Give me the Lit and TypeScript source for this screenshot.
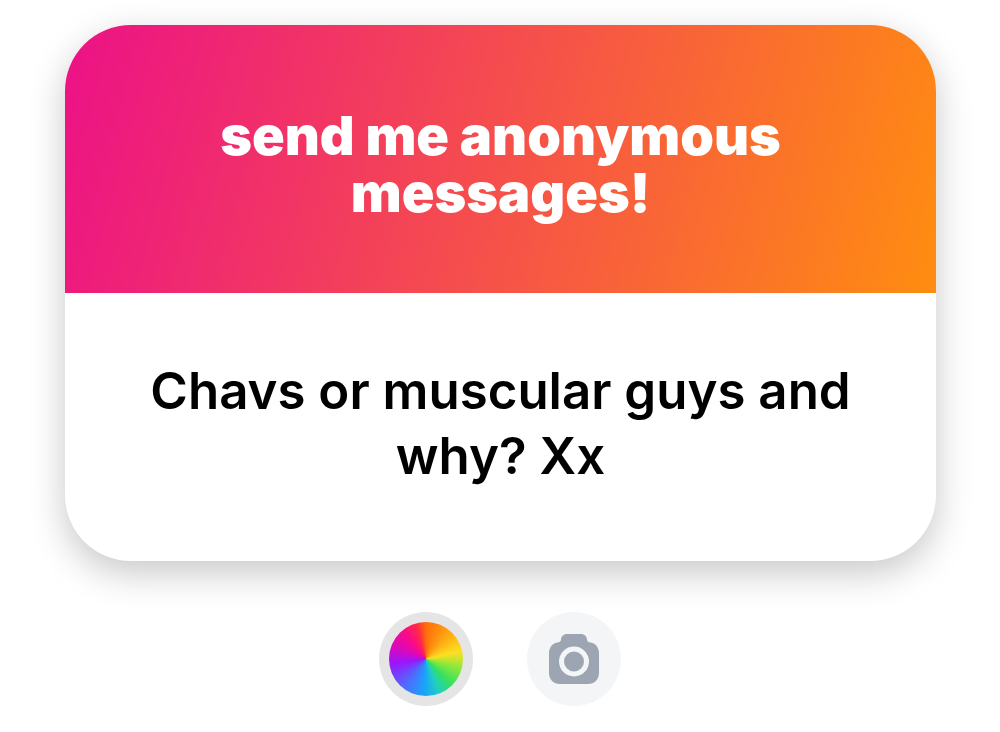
import { LitElement, html, css } from "lit";
import { customElement } from "lit/decorators.js";

@customElement("app-root")
export class AppRoot extends LitElement {
  static styles = css`
    :host { display: block; background: #fff; font-family: Inter, "Liberation Sans", sans-serif; }
    * { box-sizing: border-box; }
    main { display: flex; flex-direction: column; gap: 51px; padding: 25px 64px 27px; }
    .card { margin-left: 1px; border-radius: 66px; overflow: hidden; background: #fff; box-shadow: 0 12px 36px rgba(0, 0, 0, 0.22); text-align: center; }
    .prompt, .message { display: flex; align-items: center; justify-content: center; }
    .prompt { padding: 82px 64px 72px; background: linear-gradient(105deg, #ec1187, #ff8d10); color: #fff; }
    h1 { margin: 0; font-size: 54px; line-height: 57px; font-weight: 900; }
    .message { padding: 65px 64px 73px; }
    p { margin: 0; font-size: 51px; line-height: 65px; font-weight: 600; color: #000; }
    .tools { display: flex; justify-content: center; gap: 54px; }
    button { width: 94px; height: 94px; padding: 0; border: 0; border-radius: 50%; display: grid; place-items: center; }
    .color { background: #e5e5e5; }
    .photo { background: #f3f5f7; }
    .wheel { width: 74px; height: 74px; border-radius: 50%; background: conic-gradient(#ff6d0a, #ff9d10 35deg, #fbe022 78deg, #8fe83a 105deg, #35e060 135deg, #20cfc0 158deg, #18a5fa 182deg, #5168ff 220deg, #9a16fb 262deg, #d808c0 290deg, #fb0a88 322deg, #ff2a48 345deg, #ff6d0a); }
    svg { display: block; width: 50px; height: 50px; }
  `;

  render() {
    return html`
      <main>
        <article class="card">
          <header class="prompt"><h1>send me anonymous<br />messages!</h1></header>
          <div class="message"><p>Chavs or muscular guys and<br />why? Xx</p></div>
        </article>
        <div class="tools">
          <button class="color" type="button" aria-label="Change color"><span class="wheel"></span></button>
          <button class="photo" type="button" aria-label="Add photo">
            <svg viewBox="0 0 50 50" fill="#9ea5b2" aria-hidden="true">
              <path d="M18 0h14c3.500 0 6 2.500 6 5.500 0 1.500 1 2.500 2.500 2.700C46 8.800 50 13 50 19v20c0 6.500-4.500 11-11 11H11C4.500 50 0 45.500 0 39V19C0 13 4 8.800 9.500 8.200 11 8 12 7 12 5.500 12 2.500 14.500 0 18 0z" />
              <circle cx="25" cy="27.500" r="12.500" fill="none" stroke="#f3f5f7" stroke-width="5" />
            </svg>
          </button>
        </div>
      </main>
    `;
  }
}
